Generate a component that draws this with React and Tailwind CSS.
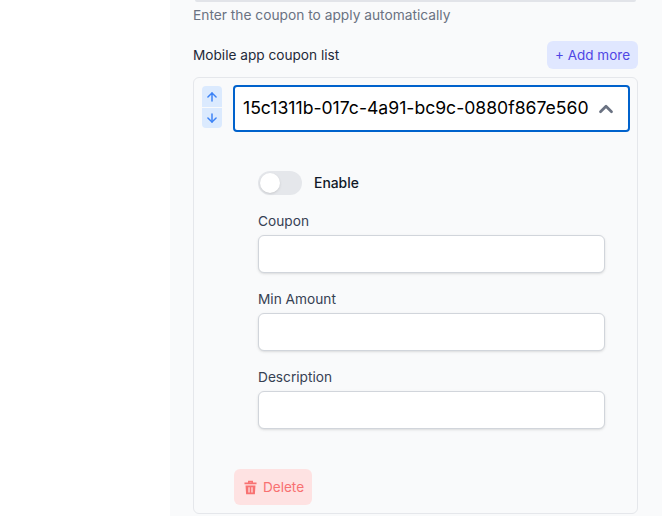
import { ArrowUp, ArrowDown, ChevronUp } from 'lucide-react';

function Field({ label }) {
  return (
    <div className="flex flex-col">
      <label className="text-[13.7px] leading-5 text-gray-700">{label}</label>
      <input className="mt-[4px] h-[38px] w-full rounded-md border border-[#d1d5db] bg-white shadow-sm" />
    </div>
  );
}

function TrashIcon() {
  return (
    <svg viewBox="0 0 24 24" className="h-[17px] w-[17px]" fill="currentColor">
      <path fillRule="evenodd" d="M8.5 5V2.5h7V5h5v2.5h-17V5h5zm2-.5v.5h3v-.5h-3z" />
      <path fillRule="evenodd" d="M5 9h14l-.8 12.5H5.800L5 9zm4 2.500v7.500h1.800v-7.500H9zm4.200 0v7.500H15v-7.500h-1.800z" />
    </svg>
  );
}

export default function App() {
  return (
    <div className="flex h-[516px] w-[662px] overflow-hidden bg-white font-['Inter',sans-serif]">
      <div className="w-[170px] shrink-0" />
      <main className="flex-1 bg-[#f9fafb] pl-[23px] pr-6">
        <div className="ml-0.5 h-[2px] w-[441px] rounded-b bg-[#e2e4e9]" />
        <p className="mt-[3px] text-[13.75px] leading-5 text-gray-500">Enter the coupon to apply automatically</p>

        <div className="mt-4 flex items-center justify-between">
          <span className="text-[13.65px] leading-5 text-gray-800">Mobile app coupon list</span>
          <button className="h-7 w-[91px] rounded-md bg-[#e0e7ff] text-[13.5px] text-[#4f46e5]">+ Add more</button>
        </div>

        <div className="mt-[8px] h-[437px] rounded-md border border-[#e5e7eb] pl-2 pr-[7px] pt-[7px]">
          <div className="flex gap-[11px]">
            <div className="mt-px flex w-5 flex-col gap-px">
              <button className="flex h-[21px] items-center justify-center rounded-t bg-[#dbeafe] text-[#3b82f6]">
                <ArrowUp size={14} strokeWidth={2.5} />
              </button>
              <button className="flex h-[20px] items-center justify-center rounded-b bg-[#dbeafe] text-[#3b82f6]">
                <ArrowDown size={14} strokeWidth={2.5} />
              </button>
            </div>
            <div className="flex h-[47px] flex-1 items-center justify-between rounded border-2 border-[#0062cc] bg-white pl-2 pr-[11px]">
              <span className="text-[17.6px] text-black">15c1311b-017c-4a91-bc9c-0880f867e560</span>
              <ChevronUp size={22} strokeWidth={3} className="text-gray-500" />
            </div>
          </div>

          <div className="ml-[56px] mr-[25px] mt-[39px] flex flex-col">
            <div className="flex items-center gap-3">
              <span className="flex h-6 w-11 items-center rounded-full bg-[#e5e7eb] pl-0.5">
                <span className="h-5 w-5 rounded-full bg-white shadow" />
              </span>
              <span className="text-[13.9px] font-medium text-gray-900">Enable</span>
            </div>
            <div className="mt-[16px] flex flex-col gap-[16px]">
              <Field label="Coupon" />
              <Field label="Min Amount" />
              <Field label="Description" />
            </div>
          </div>

          <button className="ml-[32px] mt-[40px] flex h-9 w-[78px] items-center justify-center gap-[4px] rounded-md bg-[#fee2e2] text-[13.6px] text-[#f87171]">
            <TrashIcon />
            Delete
          </button>
        </div>
      </main>
    </div>
  );
}
